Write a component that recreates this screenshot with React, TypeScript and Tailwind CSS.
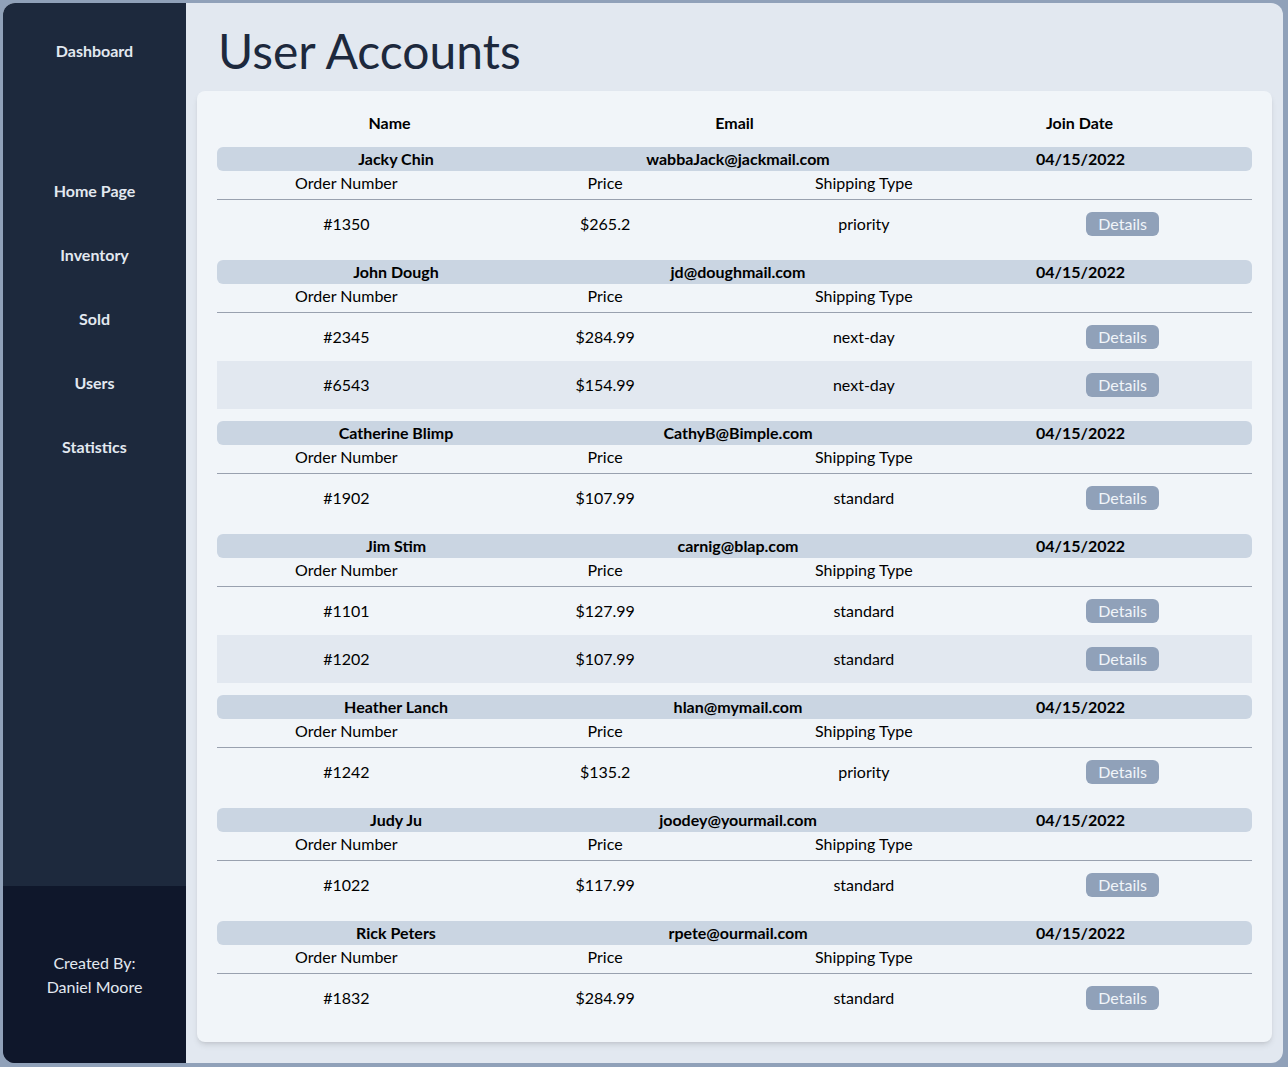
type Order = { id: string; price: string; shipping: string };

type User = {
  name: string;
  email: string;
  joined: string;
  orders: Order[];
};

const USERS: User[] = [
  {
    name: "Jacky Chin",
    email: "wabbaJack@jackmail.com",
    joined: "04/15/2022",
    orders: [{ id: "#1350", price: "$265.2", shipping: "priority" }],
  },
  {
    name: "John Dough",
    email: "jd@doughmail.com",
    joined: "04/15/2022",
    orders: [
      { id: "#2345", price: "$284.99", shipping: "next-day" },
      { id: "#6543", price: "$154.99", shipping: "next-day" },
    ],
  },
  {
    name: "Catherine Blimp",
    email: "CathyB@Bimple.com",
    joined: "04/15/2022",
    orders: [{ id: "#1902", price: "$107.99", shipping: "standard" }],
  },
  {
    name: "Jim Stim",
    email: "carnig@blap.com",
    joined: "04/15/2022",
    orders: [
      { id: "#1101", price: "$127.99", shipping: "standard" },
      { id: "#1202", price: "$107.99", shipping: "standard" },
    ],
  },
  {
    name: "Heather Lanch",
    email: "hlan@mymail.com",
    joined: "04/15/2022",
    orders: [{ id: "#1242", price: "$135.2", shipping: "priority" }],
  },
  {
    name: "Judy Ju",
    email: "joodey@yourmail.com",
    joined: "04/15/2022",
    orders: [{ id: "#1022", price: "$117.99", shipping: "standard" }],
  },
  {
    name: "Rick Peters",
    email: "rpete@ourmail.com",
    joined: "04/15/2022",
    orders: [{ id: "#1832", price: "$284.99", shipping: "standard" }],
  },
];

const NAV = ["Home Page", "Inventory", "Sold", "Users", "Statistics"];

function Sidebar() {
  return (
    <aside className="flex w-[183px] shrink-0 flex-col bg-slate-800 text-slate-200">
      <nav className="flex flex-1 flex-col items-center pt-9">
        <a className="text-base font-bold leading-6">Dashboard</a>
        <ul className="mt-[116px] flex flex-col items-center gap-10">
          {NAV.map((item) => (
            <li key={item} className="text-base font-bold leading-6">
              {item}
            </li>
          ))}
        </ul>
      </nav>
      <footer className="flex h-[177px] flex-col items-center justify-center bg-slate-900 text-base leading-6">
        <p>Created By:</p>
        <p>Daniel Moore</p>
      </footer>
    </aside>
  );
}

function UserBlock({ user }: { user: User }) {
  return (
    <div>
      <div className="grid h-6 grid-cols-[358px_326px_1fr] items-center rounded-md bg-slate-300 text-center font-bold leading-6">
        <span>{user.name}</span>
        <span>{user.email}</span>
        <span className="pl-2">{user.joined}</span>
      </div>
      <div className="grid h-[29px] grid-cols-4 border-b border-gray-400 pb-1 text-center leading-6">
        <span>Order Number</span>
        <span>Price</span>
        <span>Shipping Type</span>
        <span />
      </div>
      {user.orders.map((order, i) => (
        <div
          key={order.id}
          className={`grid h-12 grid-cols-4 items-center text-center ${
            i % 2 === 1 ? "bg-slate-200" : ""
          }`}
        >
          <span>{order.id}</span>
          <span>{order.price}</span>
          <span>{order.shipping}</span>
          <span className="flex justify-center">
            <button className="h-6 rounded-md bg-slate-400 px-3 leading-6 text-slate-100">
              Details
            </button>
          </span>
        </div>
      ))}
    </div>
  );
}

export default function App() {
  return (
    <div className="min-h-screen bg-slate-400 p-[3px] font-['Segoe_UI','Lato',sans-serif] text-black">
      <div className="flex min-h-[1060px] w-[1280px] overflow-hidden rounded-xl bg-slate-200">
        <Sidebar />
        <main className="flex-1 px-[11px] pb-5">
          <h1 className="ml-[21px] pt-6 text-5xl leading-[48px] text-slate-800">
            User Accounts
          </h1>
          <section className="mt-4 rounded-lg bg-slate-100 p-5 shadow-md">
            <div className="mb-3 grid h-6 grid-cols-3 text-center font-bold leading-6">
              <span>Name</span>
              <span>Email</span>
              <span>Join Date</span>
            </div>
            <div className="flex flex-col gap-3">
              {USERS.map((u) => (
                <UserBlock key={u.name} user={u} />
              ))}
            </div>
          </section>
        </main>
      </div>
    </div>
  );
}
